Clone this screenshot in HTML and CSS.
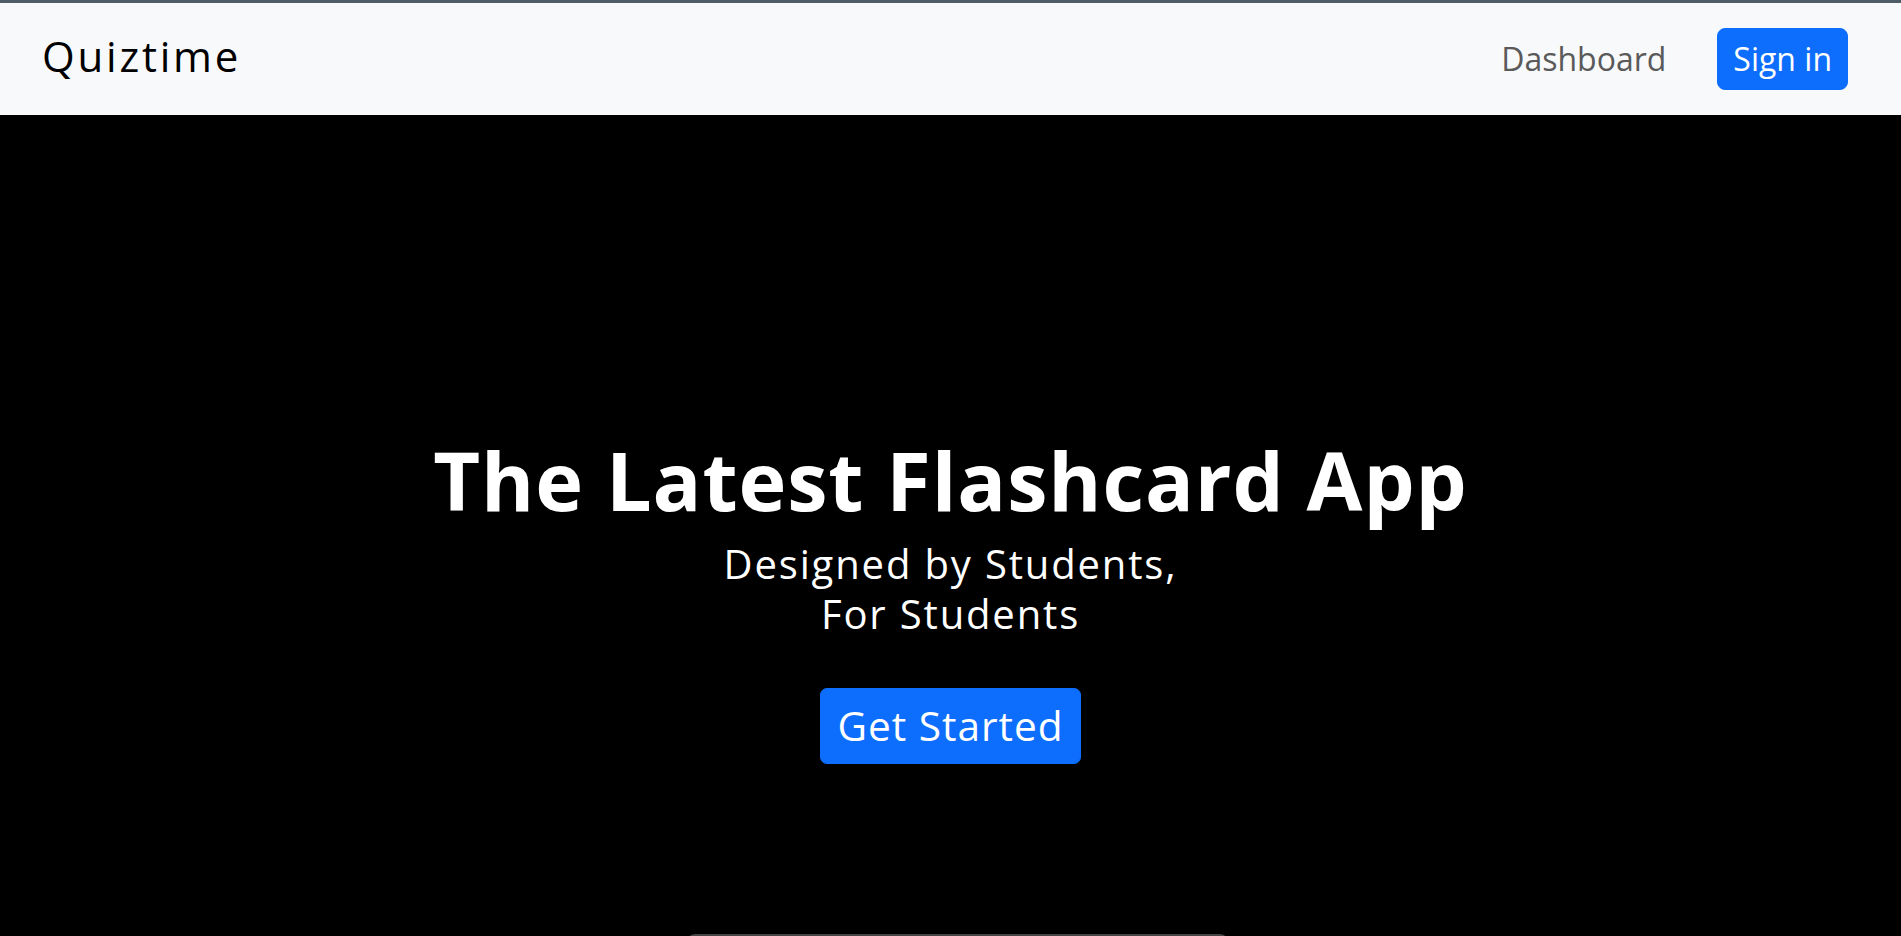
FILE: index.html
```html
<!DOCTYPE html>
<html lang="en">
<head>
<meta charset="utf-8">
<title>Quiztime</title>
<link rel="stylesheet" href="styles.css">
</head>
<body>
<nav class="navbar">
  <a class="brand" href="#">Quiztime</a>
  <div class="nav-right">
    <a class="nav-link" href="#">Dashboard</a>
    <a class="btn btn-signin" href="#">Sign in</a>
  </div>
</nav>
<main class="hero">
  <h1 class="hero-title">The Latest Flashcard App</h1>
  <p class="hero-sub">Designed by Students,<br>For Students</p>
  <a class="btn btn-start" href="#">Get Started</a>
  <div class="preview-card"></div>
</main>
</body>
</html>
```
FILE: styles.css
```css
* { box-sizing: border-box; }
html, body { margin: 0; padding: 0; }
body {
  background: #000;
  font-family: "Open Sans", "Liberation Sans", sans-serif;
  overflow: hidden;
  height: 936px;
}
a { text-decoration: none; }

.navbar {
  display: flex;
  align-items: center;
  justify-content: space-between;
  height: 115px;
  border-top: 3px solid #4f5d68;
  background: #f8f9fa;
  padding: 0 53px 0 42px;
}
.brand {
  color: #000;
  font-size: 42px;
  line-height: 1.2;
  padding-bottom: 6px;
  letter-spacing: 2.8px;
}
.nav-right {
  display: flex;
  align-items: center;
  gap: 51px;
}
.nav-link {
  color: #5a5a5a;
  font-size: 32px;
  line-height: 1.5;
}
.btn {
  display: inline-block;
  background: #0d6efd;
  color: #fff;
  border: 1px solid #0d6efd;
}
.btn-signin {
  font-size: 32px;
  line-height: 1.5;
  padding: 6px 15px;
  border-radius: 8px;
}

.hero {
  display: flex;
  flex-direction: column;
  align-items: center;
  padding-top: 316px;
  color: #fff;
  text-align: center;
}
.hero-title {
  margin: 0;
  font-size: 81px;
  line-height: 1.2;
  font-weight: 700;
  letter-spacing: 0.9px;
}
.hero-sub {
  margin: 10.5px 0 0;
  font-size: 40px;
  line-height: 50px;
  letter-spacing: 1.85px;
}
.btn-start {
  margin-top: 49.5px;
  font-size: 40.6px;
  line-height: 1.5;
  padding: 6.5px 16px;
  border-radius: 7px;
  letter-spacing: 1px;
}
.preview-card {
  margin-top: 170px;
  margin-left: 14px;
  width: 541px;
  height: 300px;
  background: #444;
  border-radius: 8px;
  flex-shrink: 0;
}
```
